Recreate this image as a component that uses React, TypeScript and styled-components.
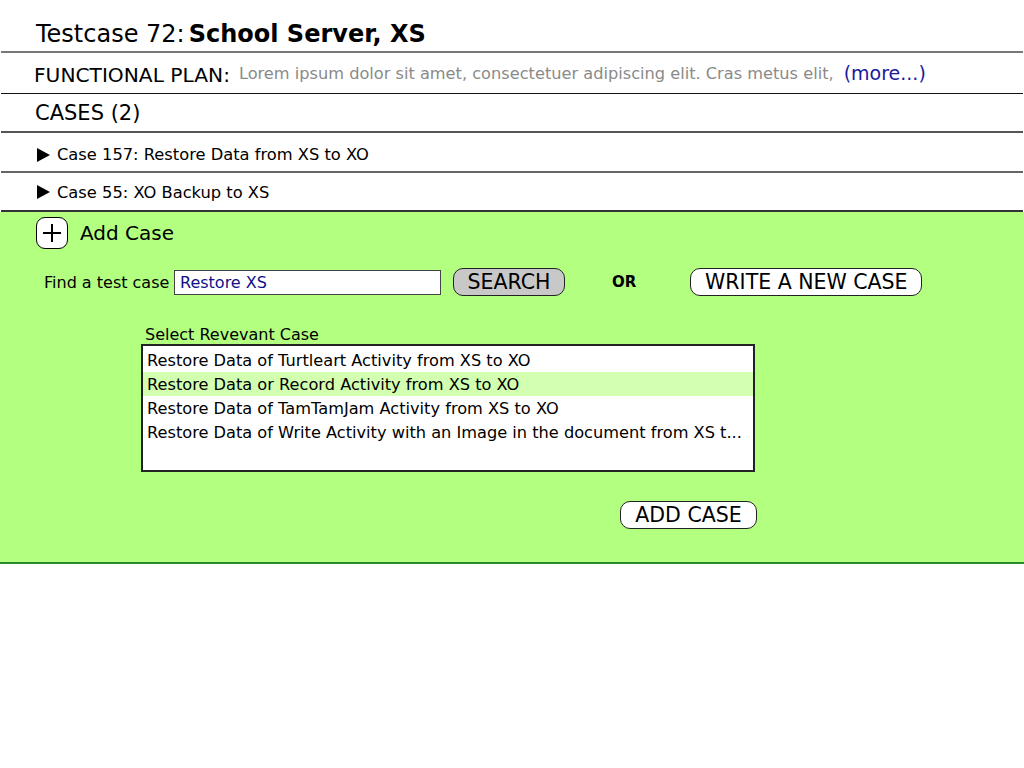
import React from "react";
import styled, { createGlobalStyle } from "styled-components";

const Global = createGlobalStyle`
  html, body { margin: 0; padding: 0; background: #fff; }
  body { font-family: "DejaVu Sans", Verdana, sans-serif; color: #000; }
`;

const Page = styled.div`
  width: 1024px;
  display: flex;
  flex-direction: column;
`;

const Header = styled.div`
  border-bottom: 2px solid #777;
  margin: 0 1px;
  display: flex;
  align-items: flex-end;
  padding-left: 35px;
  padding-bottom: 3px;
  box-sizing: border-box;
  height: 53px;
`;

const TitleLabel = styled.span`
  font-size: 24px;
  margin-right: 4px;
`;

const TitleName = styled.span`
  font-size: 24px;
  font-weight: bold;
`;

const Row = styled.div<{ $h: number; $line: string; $w?: number; $pt?: number }>`
  height: ${(p) => p.$h}px;
  box-sizing: border-box;
  border-bottom: ${(p) => p.$w ?? 2}px solid ${(p) => p.$line};
  margin: 0 1px;
  display: flex;
  align-items: center;
  padding-left: 33px;
  padding-top: ${(p) => p.$pt ?? 0}px;
`;

const PlanLabel = styled.span`
  font-size: 20.2px;
  margin-right: 9px;
  padding-top: 4px;
`;

const PlanText = styled.span`
  font-size: 16.2px;
  color: #8a8a8a;
  margin-right: 10px;
`;

const More = styled.span`
  font-size: 19px;
  color: #1a1a9a;
`;

const SectionTitle = styled.span`
  font-size: 21px;
  padding-left: 1px;
`;

const CaseRow = styled.div`
  display: flex;
  align-items: center;
  gap: 7px;
  font-size: 16.3px;
  padding-left: 3px;
`;

const Triangle = styled.span`
  width: 0;
  height: 0;
  border-top: 7px solid transparent;
  border-bottom: 7px solid transparent;
  border-left: 13px solid #000;
`;

const Panel = styled.div`
  background: #b3ff80;
  height: 352px;
  box-sizing: border-box;
  border-bottom: 2px solid #2a8a2a;
  display: flex;
  flex-direction: column;
  padding-top: 5px;
`;

const AddRow = styled.div`
  display: flex;
  align-items: center;
  gap: 12px;
  padding-left: 36px;
`;

const PlusBox = styled.div`
  width: 32px;
  height: 32px;
  box-sizing: border-box;
  border: 1.5px solid #000;
  border-radius: 9px;
  background: #fff;
  display: flex;
  align-items: center;
  justify-content: center;
`;

const AddLabel = styled.span`
  font-size: 20px;
`;

const SearchRow = styled.div`
  display: flex;
  align-items: center;
  margin-top: 19px;
  padding-left: 44px;
`;

const FindLabel = styled.span`
  font-size: 16px;
  width: 130px;
`;

const Input = styled.div`
  width: 267px;
  height: 25px;
  box-sizing: border-box;
  border: 1px solid #444;
  background: #fff;
  color: #10108a;
  font-size: 16px;
  display: flex;
  align-items: center;
  padding-left: 5px;
`;

const Pill = styled.div<{ $w: number; $bg: string }>`
  width: ${(p) => p.$w}px;
  height: 28px;
  box-sizing: border-box;
  border: 1.5px solid #222;
  border-radius: 10px;
  background: ${(p) => p.$bg};
  display: flex;
  align-items: center;
  justify-content: center;
  font-size: 20.5px;
`;

const Or = styled.span`
  font-size: 15px;
  font-weight: bold;
  margin: 0 54px 0 47px;
`;

const SelectBlock = styled.div`
  display: flex;
  flex-direction: column;
  margin-left: 141px;
  margin-top: 29px;
  width: 614px;
`;

const SelectLabel = styled.span`
  font-size: 16px;
  padding-left: 4px;
`;

const ListBox = styled.div`
  height: 128px;
  box-sizing: border-box;
  border: 2px solid #222;
  background: #fff;
  padding-top: 2px;
  display: flex;
  flex-direction: column;
`;

const Option = styled.div<{ $sel?: boolean }>`
  height: 24px;
  display: flex;
  align-items: center;
  padding-left: 4px;
  font-size: 16.2px;
  background: ${(p) => (p.$sel ? "#d2ffb0" : "transparent")};
  white-space: nowrap;
`;

const AddCaseWrap = styled.div`
  display: flex;
  justify-content: flex-end;
  margin-right: -2px;
  margin-top: 29px;
`;

const options = [
  "Restore Data of Turtleart Activity from XS to XO",
  "Restore Data or Record Activity from XS to XO",
  "Restore Data of TamTamJam Activity from XS to XO",
  "Restore Data of Write Activity with an Image in the document from XS t...",
];

export default function App() {
  return (
    <Page>
      <Global />
      <Header>
        <TitleLabel>Testcase 72:</TitleLabel>
        <TitleName>School Server, XS</TitleName>
      </Header>
      <Row $h={41} $line="#111" $w={1.5}>
        <PlanLabel>FUNCTIONAL PLAN:</PlanLabel>
        <PlanText>
          Lorem ipsum dolor sit amet, consectetuer adipiscing elit. Cras metus elit,
        </PlanText>
        <More>(more...)</More>
      </Row>
      <Row $h={39} $line="#555">
        <SectionTitle>CASES (2)</SectionTitle>
      </Row>
      <Row $h={40} $line="#666" $pt={5}>
        <CaseRow>
          <Triangle />
          Case 157: Restore Data from XS to XO
        </CaseRow>
      </Row>
      <Row $h={39} $line="#333" $pt={1}>
        <CaseRow>
          <Triangle />
          Case 55: XO Backup to XS
        </CaseRow>
      </Row>
      <Panel>
        <AddRow>
          <PlusBox>
            <svg width="22" height="22" viewBox="0 0 22 22">
              <path d="M11 2v18M2 11h18" stroke="#000" strokeWidth="2" />
            </svg>
          </PlusBox>
          <AddLabel>Add Case</AddLabel>
        </AddRow>
        <SearchRow>
          <FindLabel>Find a test case</FindLabel>
          <Input>Restore XS</Input>
          <Pill $w={112} $bg="#c8c8c8" style={{ marginLeft: 12 }}>
            SEARCH
          </Pill>
          <Or>OR</Or>
          <Pill $w={232} $bg="#fff">
            WRITE A NEW CASE
          </Pill>
        </SearchRow>
        <SelectBlock>
          <SelectLabel>Select Revevant Case</SelectLabel>
          <ListBox>
            {options.map((o, i) => (
              <Option key={o} $sel={i === 1}>
                {o}
              </Option>
            ))}
          </ListBox>
          <AddCaseWrap>
            <Pill $w={137} $bg="#fff">
              ADD CASE
            </Pill>
          </AddCaseWrap>
        </SelectBlock>
      </Panel>
    </Page>
  );
}
